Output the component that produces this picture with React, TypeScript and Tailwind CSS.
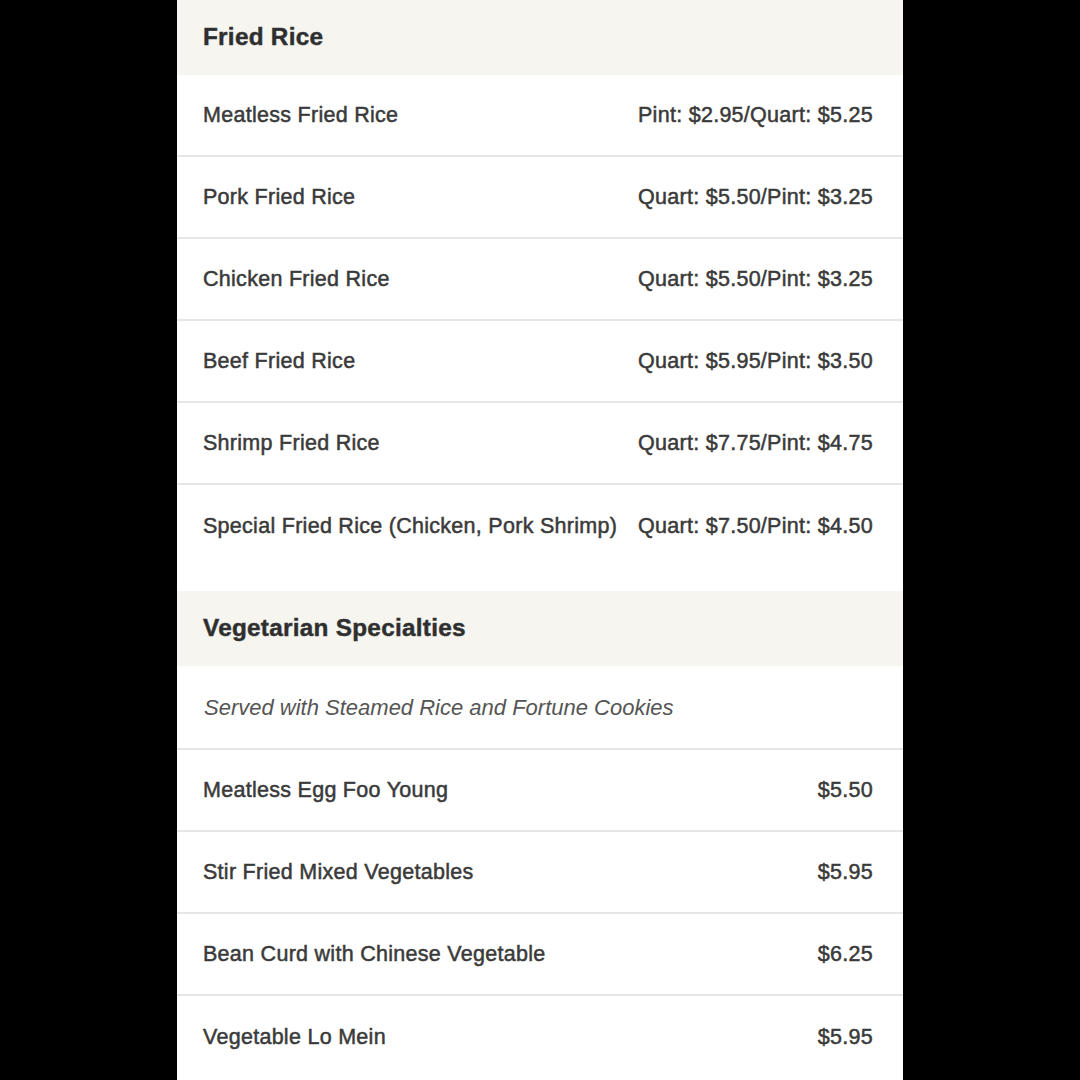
import React from 'react';

type Item = { name: string; price: string };

const friedRice: Item[] = [
  { name: 'Meatless Fried Rice', price: 'Pint: $2.95/Quart: $5.25' },
  { name: 'Pork Fried Rice', price: 'Quart: $5.50/Pint: $3.25' },
  { name: 'Chicken Fried Rice', price: 'Quart: $5.50/Pint: $3.25' },
  { name: 'Beef Fried Rice', price: 'Quart: $5.95/Pint: $3.50' },
  { name: 'Shrimp Fried Rice', price: 'Quart: $7.75/Pint: $4.75' },
  { name: 'Special Fried Rice (Chicken, Pork Shrimp)', price: 'Quart: $7.50/Pint: $4.50' },
];

const vegetarian: Item[] = [
  { name: 'Meatless Egg Foo Young', price: '$5.50' },
  { name: 'Stir Fried Mixed Vegetables', price: '$5.95' },
  { name: 'Bean Curd with Chinese Vegetable', price: '$6.25' },
  { name: 'Vegetable Lo Mein', price: '$5.95' },
];

const SectionHeader = ({ title }: { title: string }) => (
  <div className="h-[75px] flex items-center bg-[#f6f5f0] pl-[26px]">
    <h2 className="text-[24.3px] font-bold text-[#2e2e2e]">{title}</h2>
  </div>
);

const Row = ({ item, last }: { item: Item; last?: boolean }) => (
  <div
    className={`h-[82px] flex items-center justify-between gap-[8px] pl-[26px] pr-[30px] ${
      last ? '' : 'border-b-2 border-[#e6e6e6]'
    }`}
  >
    <span className="whitespace-nowrap">{item.name}</span>
    <span className="whitespace-nowrap">{item.price}</span>
  </div>
);

export default function App() {
  return (
    <div className="min-h-screen bg-black flex justify-center">
      <div
        className="w-[726px] h-[1080px] overflow-hidden bg-white text-[21.5px] tracking-[0.28px] text-[#3a3a3a] [-webkit-text-stroke:0.5px_#3a3a3a]"
        style={{ fontFamily: '"Liberation Sans", Arial, sans-serif' }}
      >
        {/* Fried Rice */}
        <SectionHeader title="Fried Rice" />
        <div className="pb-[24px]">
          {friedRice.map((item, i) => (
            <Row key={item.name} item={item} last={i === friedRice.length - 1} />
          ))}
        </div>

        {/* Vegetarian */}
        <SectionHeader title="Vegetarian Specialties" />
        <div className="h-[84px] flex items-center pl-[27px] border-b-2 border-[#e6e6e6]">
          <span className="italic text-[22px] tracking-normal text-[#555] [-webkit-text-stroke:0px]">
            Served with Steamed Rice and Fortune Cookies
          </span>
        </div>
        {vegetarian.map((item, i) => (
          <Row key={item.name} item={item} last={i === vegetarian.length - 1} />
        ))}
      </div>
    </div>
  );
}
